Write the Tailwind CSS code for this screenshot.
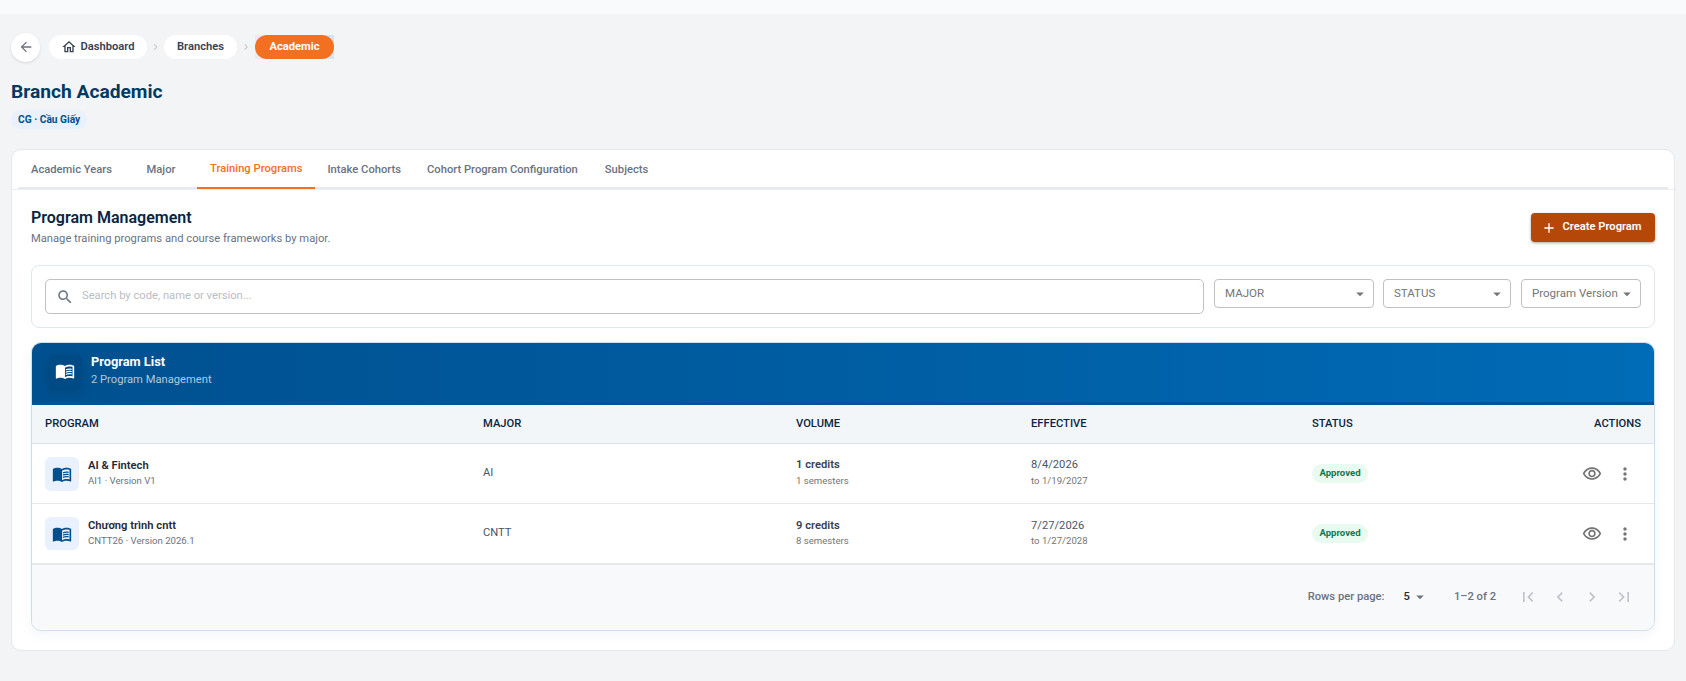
<!DOCTYPE html>
<html lang="en">
<head>
    <meta charset="UTF-8">
    <meta name="viewport" content="width=device-width, initial-scale=1.0">
    <title>Branch Academic</title>
    <script src="https://cdn.jsdelivr.net/npm/@tailwindcss/browser@4"></script>
</head>
<body class="bg-[#f3f4f6] font-['Roboto',sans-serif] h-[681px] overflow-hidden">
    <div class="h-[14px] bg-[#f9fafb]"></div>

    <main class="px-[11px]">
        <!-- breadcrumb -->
        <nav class="flex items-center pt-[19px] h-[47px]">
            <button class="w-[29px] h-[29px] rounded-full bg-white shadow-sm flex items-center justify-center text-[#6b7280]">
                <svg class="w-[16px] h-[16px]" viewBox="0 0 24 24" fill="currentColor"><path d="M20 11H7.83l5.59-5.59L12 4l-8 8 8 8 1.41-1.41L7.83 13H20v-2z"/></svg>
            </button>
            <a class="ml-[9px] h-[24px] w-[98px] rounded-full bg-white flex items-center justify-center gap-[3px] text-[11.2px] font-semibold text-[#374151]">
                <svg class="w-[16px] h-[16px]" viewBox="0 0 24 24" fill="currentColor"><path d="m12 5.69 5 4.5V18h-2v-6H9v6H7v-7.81l5-4.5M12 3 2 12h3v8h6v-6h2v6h6v-8h3L12 3z"/></svg>
                Dashboard
            </a>
            <svg class="w-[17px] h-[12px] text-[#c4c7cc]" viewBox="0 0 24 24" fill="currentColor"><path d="M10 6 8.59 7.41 13.17 12l-4.58 4.59L10 18l6-6z"/></svg>
            <a class="h-[24px] w-[73px] rounded-full bg-white flex items-center justify-center text-[11.2px] font-semibold text-[#374151]">Branches</a>
            <svg class="w-[18px] h-[12px] text-[#c4c7cc]" viewBox="0 0 24 24" fill="currentColor"><path d="M10 6 8.59 7.41 13.17 12l-4.58 4.59L10 18l6-6z"/></svg>
            <div class="bg-gradient-to-r from-[#e6ecf5] to-[#d6e3f4]">
                <a class="h-[24px] w-[79px] rounded-full bg-[#f37021] flex items-center justify-center text-[11.2px] font-bold text-white">Academic</a>
            </div>
        </nav>

        <h1 class="mt-[17px] text-[19.2px] leading-[28px] font-bold text-[#003a63]">Branch Academic</h1>
        <span class="inline-flex items-center mt-[4px] h-[19px] px-[7px] rounded-full bg-[#e8f1fd] text-[10.2px] font-bold text-[#00508f]">CG · Cầu Giấy</span>

        <!-- main card -->
        <section class="mt-[19px] h-[502px] bg-white rounded-[10px] border border-[#e5e7eb]">
            <div class="border-b border-[#eceef1]">
                <div class="flex h-[39px] mx-[6px] border-b-2 border-[#e8e9ee] text-[11.2px] font-medium text-[#6b7280]">
                    <a class="h-[39px] w-[107px] pt-[2px] pl-[13px] flex items-center">Academic Years</a>
                    <a class="h-[39px] w-[72px] pt-[2px] flex items-center justify-center">Major</a>
                    <a class="h-[39px] pt-[2px] px-[13px] flex items-center text-[#f37021] border-b-2 border-[#f37021]">Training Programs</a>
                    <a class="h-[39px] pt-[2px] pl-[12px] pr-[13px] flex items-center">Intake Cohorts</a>
                    <a class="h-[39px] pt-[2px] pl-[13px] pr-[14px] flex items-center">Cohort Program Configuration</a>
                    <a class="h-[39px] pt-[2px] px-[13px] flex items-center">Subjects</a>
                </div>
            </div>

            <div class="px-[19px]">
                <div class="flex items-start justify-between pt-[17px] h-[75px]">
                    <div>
                        <h2 class="text-[16px] leading-[22px] font-semibold text-[#0a2540]">Program Management</h2>
                        <p class="mt-[2px] text-[11.2px] leading-[16px] text-[#6b7280]">Manage training programs and course frameworks by major.</p>
                    </div>
                    <button class="mt-[6px] h-[29px] w-[124px] pr-[3px] rounded-[4px] bg-[#b54708] text-white text-[11.2px] font-semibold flex items-center justify-center gap-[5px] shadow-[0_1px_3px_rgba(0,0,0,0.35)]">
                        <svg class="w-[16px] h-[16px]" viewBox="0 0 24 24" fill="currentColor"><path d="M19 13h-6v6h-2v-6H5v-2h6V5h2v6h6v2z"/></svg>
                        Create Program
                    </button>
                </div>

                <!-- filters -->
                <div class="h-[63px] rounded-[8px] border border-[#dfe7f0] flex items-start gap-[10px] pt-[13px] px-[13px]">
                    <div class="flex-1 h-[35px] rounded-[5px] border border-[#c0c0c0] flex items-center pl-[10px] gap-[8px] text-[11.2px] text-[#b9bdc4]">
                        <svg class="w-[18px] h-[18px] text-[#6b7280]" viewBox="0 0 24 24" fill="currentColor"><path d="M15.5 14h-.79l-.28-.27C15.41 12.59 16 11.11 16 9.5 16 5.91 13.09 3 9.5 3S3 5.91 3 9.5 5.91 16 9.5 16c1.61 0 3.09-.59 4.23-1.57l.27.28v.79l5 4.99L20.49 19l-4.99-5zm-6 0C7.01 14 5 11.99 5 9.5S7.01 5 9.5 5 14 7.01 14 9.5 11.99 14 9.5 14z"/></svg>
                        Search by code, name or version...
                    </div>
                    <div class="w-[160px] h-[29px] pt-px rounded-[4px] border border-[#c0c0c0] flex items-center justify-between pl-[10px] pr-[4px] text-[11.52px] text-[#757575]">
                        MAJOR
                        <svg class="w-[18px] h-[18px]" viewBox="0 0 24 24" fill="currentColor"><path d="m7 10 5 5 5-5z"/></svg>
                    </div>
                    <div class="-ml-[1px] w-[128px] h-[29px] pt-px rounded-[4px] border border-[#c0c0c0] flex items-center justify-between pl-[10px] pr-[4px] text-[11.52px] text-[#757575]">
                        STATUS
                        <svg class="w-[18px] h-[18px]" viewBox="0 0 24 24" fill="currentColor"><path d="m7 10 5 5 5-5z"/></svg>
                    </div>
                    <div class="w-[120px] h-[29px] pt-px rounded-[4px] border border-[#c0c0c0] flex items-center justify-between pl-[10px] pr-[4px] text-[11.52px] text-[#757575] whitespace-nowrap">
                        Program Version
                        <svg class="w-[18px] h-[18px] shrink-0" viewBox="0 0 24 24" fill="currentColor"><path d="m7 10 5 5 5-5z"/></svg>
                    </div>
                </div>

                <!-- table -->
                <div class="mt-[14px] h-[289px] rounded-[10px] border border-[#cfdeeb] overflow-hidden bg-white shadow-[0_4px_12px_rgba(0,60,120,0.05)]">
                    <div class="-mx-px -mt-px h-[63px] pb-[2px] border-b-[3px] border-[#00559a] bg-gradient-to-r from-[#00508f] to-[#006bb6] flex items-center pl-[17px] gap-[9px]">
                        <div class="w-[34px] h-[34px] rounded-[8px] bg-[#004a85] shadow-[0_4px_12px_rgba(0,0,0,0.12)] flex items-center justify-center text-white">
                            <svg class="w-[20px] h-[20px]" viewBox="0 0 24 24" fill="currentColor"><path d="M21 5c-1.11-.35-2.33-.5-3.5-.5-1.95 0-4.05.4-5.5 1.5-1.45-1.1-3.55-1.5-5.5-1.5S2.45 4.9 1 6v14.65c0 .25.25.5.5.5.1 0 .15-.05.25-.05C3.1 20.45 5.05 20 6.5 20c1.95 0 4.05.4 5.5 1.5 1.35-.85 3.8-1.5 5.5-1.5 1.65 0 3.35.3 4.75 1.05.1.05.15.05.25.05.25 0 .5-.25.5-.5V6c-.6-.45-1.25-.75-2-1zm0 13.5c-1.1-.35-2.3-.5-3.5-.5-1.7 0-4.15.65-5.5 1.5V8c1.35-.85 3.8-1.5 5.5-1.5 1.2 0 2.4.15 3.5.5v11.5z"/><path d="M17.5 10.5c.88 0 1.73.09 2.5.26V9.24c-.79-.15-1.64-.24-2.5-.24-1.7 0-3.24.29-4.5.83v1.66c1.13-.64 2.7-.99 4.5-.99zM13 12.49v1.66c1.13-.64 2.7-.99 4.5-.99.88 0 1.73.09 2.5.26V11.9c-.79-.15-1.64-.24-2.5-.24-1.7 0-3.24.3-4.5.83zM17.5 14.33c-1.7 0-3.24.29-4.5.83v1.66c1.13-.64 2.7-.99 4.5-.99.88 0 1.73.09 2.5.26v-1.52c-.79-.16-1.64-.24-2.5-.24z"/></svg>
                        </div>
                        <div class="-mt-[3px]">
                            <div class="text-[12.8px] leading-[18px] font-bold text-white">Program List</div>
                            <div class="mt-[2px] text-[11.2px] leading-[14px] text-white/70">2 Program Management</div>
                        </div>
                    </div>

                    <div class="grid grid-cols-[438px_313px_235px_281px_1fr] items-center h-[39px] px-[13px] bg-[#f3f6f9] border-b border-[#d8e3ee] text-[11.2px] font-medium text-[#0a2540]">
                        <div>PROGRAM</div>
                        <div>MAJOR</div>
                        <div>VOLUME</div>
                        <div>EFFECTIVE</div>
                        <div class="flex justify-between"><span>STATUS</span><span>ACTIONS</span></div>
                    </div>

                    <div class="grid grid-cols-[438px_313px_235px_281px_1fr] items-center h-[60px] px-[13px] border-b border-[#e5e7eb]">
                        <div class="flex items-center gap-[9px]">
                            <div class="w-[34px] h-[34px] rounded-[6px] bg-[#e8f1fd] flex items-center justify-center text-[#00508f]">
                                <svg class="w-[20px] h-[20px]" viewBox="0 0 24 24" fill="currentColor"><path d="M21 5c-1.11-.35-2.33-.5-3.5-.5-1.95 0-4.05.4-5.5 1.5-1.45-1.1-3.55-1.5-5.5-1.5S2.45 4.9 1 6v14.65c0 .25.25.5.5.5.1 0 .15-.05.25-.05C3.1 20.45 5.05 20 6.5 20c1.95 0 4.05.4 5.5 1.5 1.35-.85 3.8-1.5 5.5-1.5 1.65 0 3.35.3 4.75 1.05.1.05.15.05.25.05.25 0 .5-.25.5-.5V6c-.6-.45-1.25-.75-2-1zm0 13.5c-1.1-.35-2.3-.5-3.5-.5-1.7 0-4.15.65-5.5 1.5V8c1.35-.85 3.8-1.5 5.5-1.5 1.2 0 2.4.15 3.5.5v11.5z"/><path d="M17.5 10.5c.88 0 1.73.09 2.5.26V9.24c-.79-.15-1.64-.24-2.5-.24-1.7 0-3.24.29-4.5.83v1.66c1.13-.64 2.7-.99 4.5-.99zM13 12.49v1.66c1.13-.64 2.7-.99 4.5-.99.88 0 1.73.09 2.5.26V11.9c-.79-.15-1.64-.24-2.5-.24-1.7 0-3.24.3-4.5.83zM17.5 14.33c-1.7 0-3.24.29-4.5.83v1.66c1.13-.64 2.7-.99 4.5-.99.88 0 1.73.09 2.5.26v-1.52c-.79-.16-1.64-.24-2.5-.24z"/></svg>
                            </div>
                            <div class="-mt-[2px]">
                                <div class="text-[11.2px] leading-[16px] font-semibold text-[#1f2937]">AI &amp; Fintech</div>
                                <div class="text-[9.6px] leading-[14px] text-[#6b7280]">AI1 · Version V1</div>
                            </div>
                        </div>
                        <div class="text-[11.2px] text-[#4b5563]">AI</div>
                        <div class="-mt-[3px]">
                            <div class="text-[11.2px] leading-[16px] font-semibold text-[#374151]">1 credits</div>
                            <div class="text-[9.6px] leading-[15px] text-[#757575]">1 semesters</div>
                        </div>
                        <div class="-mt-[2px]">
                            <div class="text-[11.2px] leading-[16px] text-[#4b5563]">8/4/2026</div>
                            <div class="text-[9.6px] leading-[16px] text-[#757575]">to 1/19/2027</div>
                        </div>
                        <div class="flex items-center justify-between">
                            <span class="h-[19px] w-[56px] rounded-full bg-[#e9faf1] flex items-center justify-center text-[9.6px] font-bold text-[#0a7d4f]">Approved</span>
                            <div class="flex items-center gap-[13px] pr-[6px] text-[#757575]">
                                <svg class="w-[20px] h-[20px]" viewBox="0 0 24 24" fill="currentColor"><path d="M12 6c3.79 0 7.17 2.13 8.82 5.5C19.17 14.87 15.79 17 12 17s-7.17-2.13-8.82-5.5C4.83 8.13 8.21 6 12 6m0-2C7 4 2.73 7.11 1 11.5 2.73 15.89 7 19 12 19s9.27-3.11 11-7.5C21.27 7.11 17 4 12 4zm0 5c1.38 0 2.5 1.12 2.5 2.5S13.38 14 12 14s-2.5-1.12-2.5-2.5S10.62 9 12 9m0-2c-2.48 0-4.5 2.02-4.5 4.5S9.52 16 12 16s4.5-2.02 4.5-4.5S14.48 7 12 7z"/></svg>
                                <svg class="w-[20px] h-[20px]" viewBox="0 0 24 24" fill="currentColor"><path d="M12 8c1.1 0 2-.9 2-2s-.9-2-2-2-2 .9-2 2 .9 2 2 2zm0 2c-1.1 0-2 .9-2 2s.9 2 2 2 2-.9 2-2-.9-2-2-2zm0 6c-1.1 0-2 .9-2 2s.9 2 2 2 2-.9 2-2-.9-2-2-2z"/></svg>
                            </div>
                        </div>
                    </div>

                    <div class="grid grid-cols-[438px_313px_235px_281px_1fr] items-center h-[61px] px-[13px] border-b-2 border-[#e5e7eb]">
                        <div class="flex items-center gap-[9px]">
                            <div class="w-[34px] h-[33px] rounded-[6px] bg-[#e8f1fd] flex items-center justify-center text-[#00508f]">
                                <svg class="w-[20px] h-[20px]" viewBox="0 0 24 24" fill="currentColor"><path d="M21 5c-1.11-.35-2.33-.5-3.5-.5-1.95 0-4.05.4-5.5 1.5-1.45-1.1-3.55-1.5-5.5-1.5S2.45 4.9 1 6v14.65c0 .25.25.5.5.5.1 0 .15-.05.25-.05C3.1 20.45 5.05 20 6.5 20c1.95 0 4.05.4 5.5 1.5 1.35-.85 3.8-1.5 5.5-1.5 1.65 0 3.35.3 4.75 1.05.1.05.15.05.25.05.25 0 .5-.25.5-.5V6c-.6-.45-1.25-.75-2-1zm0 13.5c-1.1-.35-2.3-.5-3.5-.5-1.7 0-4.15.65-5.5 1.5V8c1.35-.85 3.8-1.5 5.5-1.5 1.2 0 2.4.15 3.5.5v11.5z"/><path d="M17.5 10.5c.88 0 1.73.09 2.5.26V9.24c-.79-.15-1.64-.24-2.5-.24-1.7 0-3.24.29-4.5.83v1.66c1.13-.64 2.7-.99 4.5-.99zM13 12.49v1.66c1.13-.64 2.7-.99 4.5-.99.88 0 1.73.09 2.5.26V11.9c-.79-.15-1.64-.24-2.5-.24-1.7 0-3.24.3-4.5.83zM17.5 14.33c-1.7 0-3.24.29-4.5.83v1.66c1.13-.64 2.7-.99 4.5-.99.88 0 1.73.09 2.5.26v-1.52c-.79-.16-1.64-.24-2.5-.24z"/></svg>
                            </div>
                            <div class="-mt-[2px]">
                                <div class="text-[11.2px] leading-[16px] font-semibold text-[#1f2937]">Chương trình cntt</div>
                                <div class="text-[9.6px] leading-[14px] text-[#6b7280]">CNTT26 · Version 2026.1</div>
                            </div>
                        </div>
                        <div class="text-[11.2px] text-[#4b5563]">CNTT</div>
                        <div class="-mt-[1px]">
                            <div class="text-[11.2px] leading-[16px] font-semibold text-[#374151]">9 credits</div>
                            <div class="text-[9.6px] leading-[14px] text-[#757575]">8 semesters</div>
                        </div>
                        <div class="-mt-[1px]">
                            <div class="text-[11.2px] leading-[16px] text-[#4b5563]">7/27/2026</div>
                            <div class="text-[9.6px] leading-[14px] text-[#757575]">to 1/27/2028</div>
                        </div>
                        <div class="flex items-center justify-between">
                            <span class="h-[19px] w-[56px] rounded-full bg-[#e9faf1] flex items-center justify-center text-[9.6px] font-bold text-[#0a7d4f]">Approved</span>
                            <div class="flex items-center gap-[13px] pr-[6px] text-[#757575]">
                                <svg class="w-[20px] h-[20px]" viewBox="0 0 24 24" fill="currentColor"><path d="M12 6c3.79 0 7.17 2.13 8.82 5.5C19.17 14.87 15.79 17 12 17s-7.17-2.13-8.82-5.5C4.83 8.13 8.21 6 12 6m0-2C7 4 2.73 7.11 1 11.5 2.73 15.89 7 19 12 19s9.27-3.11 11-7.5C21.27 7.11 17 4 12 4zm0 5c1.38 0 2.5 1.12 2.5 2.5S13.38 14 12 14s-2.5-1.12-2.5-2.5S10.62 9 12 9m0-2c-2.48 0-4.5 2.02-4.5 4.5S9.52 16 12 16s4.5-2.02 4.5-4.5S14.48 7 12 7z"/></svg>
                                <svg class="w-[20px] h-[20px]" viewBox="0 0 24 24" fill="currentColor"><path d="M12 8c1.1 0 2-.9 2-2s-.9-2-2-2-2 .9-2 2 .9 2 2 2zm0 2c-1.1 0-2 .9-2 2s.9 2 2 2 2-.9 2-2-.9-2-2-2zm0 6c-1.1 0-2 .9-2 2s.9 2 2 2 2-.9 2-2-.9-2-2-2z"/></svg>
                            </div>
                        </div>
                    </div>

                    <!-- pagination -->
                    <div class="h-[64px] bg-[#f8f9fb] flex items-center justify-end pr-[20px] text-[11.2px] font-medium text-[#6b7280]">
                        <span>Rows per page:</span>
                        <span class="ml-[19px] text-[#1f2937]">5</span>
                        <svg class="ml-[1px] w-[18px] h-[18px]" viewBox="0 0 24 24" fill="currentColor"><path d="m7 10 5 5 5-5z"/></svg>
                        <span class="ml-[25px]">1–2 of 2</span>
                        <div class="ml-[22px] flex items-center gap-[12px] text-[#c0c3c8]">
                            <svg class="w-[20px] h-[20px]" viewBox="0 0 24 24" fill="currentColor"><path d="M18.41 16.59 13.82 12l4.59-4.59L17 6l-6 6 6 6zM6 6h2v12H6z"/></svg>
                            <svg class="w-[20px] h-[20px]" viewBox="0 0 24 24" fill="currentColor"><path d="M15.41 16.59 10.83 12l4.58-4.59L14 6l-6 6 6 6 1.41-1.41z"/></svg>
                            <svg class="w-[20px] h-[20px]" viewBox="0 0 24 24" fill="currentColor"><path d="M8.59 16.59 13.17 12 8.59 7.41 10 6l6 6-6 6-1.41-1.41z"/></svg>
                            <svg class="w-[20px] h-[20px]" viewBox="0 0 24 24" fill="currentColor"><path d="M5.59 7.41 10.18 12l-4.59 4.59L7 18l6-6-6-6zM16 6h2v12h-2z"/></svg>
                        </div>
                    </div>
                </div>
            </div>
        </section>
    </main>
</body>
</html>
